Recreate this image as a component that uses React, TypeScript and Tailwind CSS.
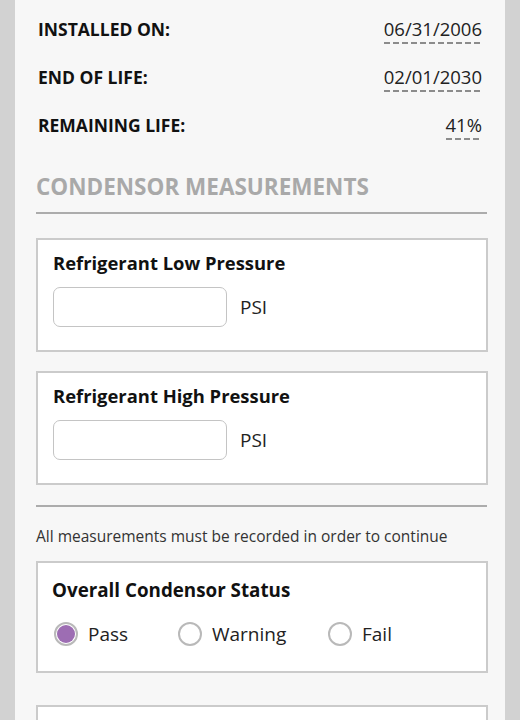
import React from 'react';

const rows = [
  { label: 'INSTALLED ON:', value: '06/31/2006' },
  { label: 'END OF LIFE:', value: '02/01/2030' },
  { label: 'REMAINING LIFE:', value: '41%' },
];

function PressureCard({ title }: { title: string }) {
  return (
    <div className="border-2 border-[#cbcbcb] bg-white pl-[15px] pt-[11px] pb-[23px]">
      <div className="text-[18.4px] font-bold leading-[24px] text-[#111]">{title}</div>
      <div className="mt-[12px] flex items-center gap-[13px]">
        <input
          type="text"
          className="h-[40px] w-[174px] rounded-[7px] border border-[#c4c4c4] bg-white outline-none"
        />
        <span className="text-[19px] text-[#222]">PSI</span>
      </div>
    </div>
  );
}

function Radio({ label, checked, width }: { label: string; checked?: boolean; width: string }) {
  return (
    <label className={`flex items-center gap-[10px] ${width}`}>
      <span className="flex h-[24px] w-[24px] items-center justify-center rounded-full border-2 border-[#b9b9b9] bg-white p-[1px]">
        {checked && <span className="h-full w-full rounded-full bg-[#9d6db3]" />}
      </span>
      <span className="text-[19px] leading-[24px] text-[#222]">{label}</span>
    </label>
  );
}

export default function App() {
  return (
    <div
      className="flex h-[720px] w-full overflow-hidden bg-[#d2d2d2]"
      style={{ fontFamily: '"Open Sans", sans-serif' }}
    >
      <div className="ml-[15px] w-[490px] shrink-0 bg-[#f7f7f7] pl-[21px] pr-[17px] pt-[17px]">
        {/* Install info */}
        {rows.map((r) => (
          <div key={r.label} className="flex h-[48px] items-start justify-between pl-[2px] pr-[6px]">
            <span className="text-[17.5px] font-bold leading-[24px] text-[#111]">{r.label}</span>
            <div className="flex flex-col items-end">
              <span className="text-[18.5px] leading-[24px] text-[#222]">{r.value}</span>
              <div className="mt-[1px] h-[2px] w-full bg-[repeating-linear-gradient(to_right,#8c8c8c_0_6px,transparent_6px_9px)]" />
            </div>
          </div>
        ))}

        <h2 className="mt-[12px] text-[22.5px] font-bold leading-[28px] text-[#a9a9a9]">
          CONDENSOR MEASUREMENTS
        </h2>
        <div className="mt-[11px] mr-[1px] h-[2px] bg-[#acacac]" />

        <div className="mt-[24px]">
          <PressureCard title="Refrigerant Low Pressure" />
        </div>
        <div className="mt-[19px]">
          <PressureCard title="Refrigerant High Pressure" />
        </div>

        <div className="mt-[20px] mr-[1px] h-[2px] bg-[#acacac]" />
        <p className="mt-[19px] text-[15.5px] leading-[20px] text-[#333]">
          All measurements must be recorded in order to continue
        </p>

        <div className="mt-[15px] border-2 border-[#cbcbcb] bg-white pl-[14px] pt-[15px] pb-[23px]">
          <div className="text-[18.8px] font-bold leading-[24px] text-[#111]">Overall Condensor Status</div>
          <div className="mt-[18px] ml-[2px] flex h-[28px] items-center">
            <Radio label="Pass" checked width="w-[124px]" />
            <Radio label="Warning" width="w-[150px]" />
            <Radio label="Fail" width="w-[100px]" />
          </div>
        </div>

        <div className="mt-[32px] h-[100px] border-2 border-[#cbcbcb] bg-white" />
      </div>
    </div>
  );
}
